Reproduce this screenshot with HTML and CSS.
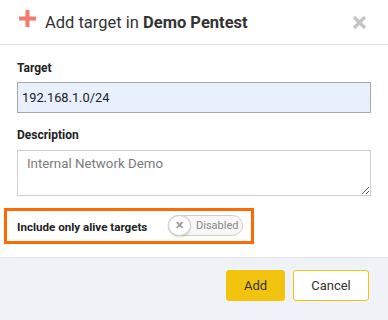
FILE: index.html
```html
<!DOCTYPE html>
<html lang="en">
<head>
    <meta charset="UTF-8">
    <meta name="viewport" content="width=device-width, initial-scale=1.0">
    <title>Add target</title>
    <link rel="stylesheet" href="styles.css">
</head>
<body>
    <div class="modal">
        <div class="modal-header">
            <svg class="plus-icon" width="17" height="17" viewBox="0 0 17 17">
                <rect x="6.5" y="0" width="4" height="17" fill="#f47a6c"/>
                <rect x="0" y="6.5" width="17" height="4" fill="#f47a6c"/>
            </svg>
            <h1 class="modal-title">Add target in <strong>Demo Pentest</strong></h1>
            <svg class="close-icon" width="15" height="15" viewBox="0 0 15 15">
                <path d="M2 2 L13 13 M13 2 L2 13" stroke="#c4c4c4" stroke-width="3.2"/>
            </svg>
        </div>

        <div class="modal-body">
            <label class="field-label" for="target">Target</label>
            <input class="text-input" id="target" type="text" value="192.168.1.0/24">

            <label class="field-label desc-label" for="description">Description</label>
            <textarea class="text-area" id="description" placeholder="Internal Network Demo"></textarea>

            <div class="highlight">
                <span class="toggle-label">Include only alive targets</span>
                <div class="toggle">
                    <span class="toggle-knob">&#x2715;</span>
                    <span class="toggle-text">Disabled</span>
                </div>
            </div>
        </div>

        <div class="modal-footer">
            <button class="btn btn-primary">Add</button>
            <button class="btn btn-secondary">Cancel</button>
        </div>
    </div>
</body>
</html>
```

FILE: styles.css
```css
body {
    margin: 0;
    font-family: Roboto, "Liberation Sans", Arial, sans-serif;
    color: #333;
    background: #fff;
}

.modal {
    width: 388px;
    height: 320px;
    display: flex;
    flex-direction: column;
}

.modal-header {
    display: flex;
    align-items: center;
    height: 44px;
    padding: 0 21px 0 19px;
    border-bottom: 1px solid #e3e3e3;
}

.plus-icon { margin-top: -8px; }

.modal-title {
    flex: 1;
    margin: 0 0 0 9px;
    font-size: 16.5px;
    font-weight: 400;
    color: #333;
}

.modal-title strong { font-weight: 700; }

.modal-body {
    flex: 1;
    padding: 16px 17px 0 17px;
    display: flex;
    flex-direction: column;
}

.field-label {
    font-size: 12px;
    line-height: 15px;
    font-weight: 700;
    color: #222;
    margin-bottom: 6px;
}

.desc-label {
    margin-top: 15px;
    margin-bottom: 7px;
}

.text-input {
    box-sizing: border-box;
    width: 354px;
    height: 31px;
    margin: 0;
    padding: 0 4px;
    font-family: inherit;
    font-size: 12.8px;
    color: #222;
    background: #e8f0fe;
    border: 1px solid #a8a8a8;
    outline: none;
}

.text-area {
    box-sizing: border-box;
    width: 354px;
    height: 46px;
    margin: 0;
    padding: 5px 9px;
    font-family: inherit;
    font-size: 13.3px;
    border: 1px solid #cfcfcf;
    outline: none;
}

.text-area::placeholder { color: #7a7a7a; }

.highlight {
    display: flex;
    align-items: center;
    width: 250px;
    height: 36px;
    box-sizing: border-box;
    margin: 12px 0 0 -13px;
    padding: 2px 0 0 10px;
    border: 3px solid #ff6a00;
}

.toggle-label {
    font-size: 11.6px;
    font-weight: 700;
    color: #222;
    width: 151px;
}

.toggle {
    display: flex;
    align-items: center;
    width: 75px;
    height: 21px;
    box-sizing: border-box;
    margin-top: -4px;
    border: 1px solid #cdcdcd;
    border-radius: 11px;
    background: #f7f7f7;
}

.toggle-knob {
    width: 23px;
    height: 21px;
    margin-left: -1px;
    box-sizing: border-box;
    border-radius: 50%;
    background: #fff;
    border: 1px solid #d0d0d0;
    box-shadow: 0 1px 2px rgba(0,0,0,0.15);
    display: flex;
    align-items: center;
    justify-content: center;
    font-size: 11px;
    font-weight: 700;
    color: #999;
}

.toggle-text {
    margin-left: 5px;
    font-size: 11px;
    color: #888;
}

.modal-footer {
    display: flex;
    justify-content: flex-end;
    gap: 8px;
    height: 50px;
    padding: 12px 19px 0 0;
    background: #eff2f7;
    border-top: 1px solid #e2e6ec;
}

.btn {
    height: 31px;
    padding: 0;
    font-family: inherit;
    font-size: 13px;
    color: #333;
    border-radius: 3px;
    cursor: pointer;
}

.btn-primary {
    width: 59px;
    background: #f2c40f;
    border: 1px solid #f2c40f;
}

.btn-secondary {
    width: 76px;
    background: #fff;
    border: 1px solid #f2c40f;
}
```
